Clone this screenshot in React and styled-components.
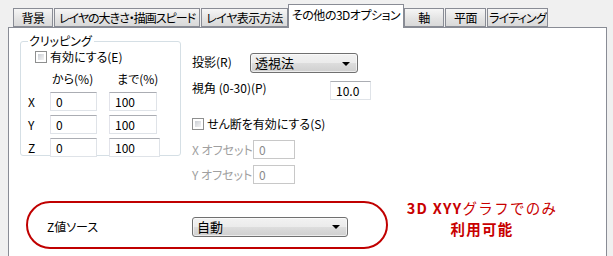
import React from "react";
import styled, { createGlobalStyle } from "styled-components";

const Global = createGlobalStyle`
  html, body { margin: 0; padding: 0; background: #f0f0f0; }
  body {
    font-family: "Noto Sans CJK JP", "Liberation Sans", sans-serif;
    font-size: 12px;
    color: #000;
    width: 613px;
    height: 256px;
    overflow: hidden;
  }
  * { box-sizing: border-box; }
`;

const Window = styled.div`
  width: 613px;
  height: 256px;
  background: #f0f0f0;
  overflow: hidden;
  font-feature-settings: "palt" 1;
`;

const TabStrip = styled.div`
  display: flex;
  align-items: flex-end;
  height: 28px;
  padding-left: 13px;
`;

const Tab = styled.div`
  position: relative;
  width: ${(p) => p.$w}px;
  height: ${(p) => (p.$active ? 24 : 19)}px;
  margin-bottom: ${(p) => (p.$active ? 0 : 1)}px;
  margin-right: ${(p) => p.$gap ?? 1}px;
  border: 1px solid #898c95;
  border-bottom: ${(p) => (p.$active ? "none" : "1px solid #898c95")};
  background: ${(p) =>
    p.$active ? "#ffffff" : "linear-gradient(#f6f6f6, #e4e4e4 55%, #d9d9d9)"};
  z-index: ${(p) => (p.$active ? 1 : 0)};
  display: flex;
  justify-content: center;
  align-items: ${(p) => (p.$active ? "flex-start" : "center")};
  padding-top: ${(p) => (p.$active ? 3 : 0)}px;
  font-size: 12px;
  line-height: 14px;
  letter-spacing: ${(p) => p.$ls ?? -0.5}px;
  white-space: nowrap;
  overflow: hidden;
`;

const Panel = styled.div`
  margin-top: -1px;
  margin-left: 8px;
  width: 599px;
  height: 240px;
  background: #fff;
  border: 1px solid #898c95;
  border-bottom: none;
`;

const TopSection = styled.div`
  display: flex;
  align-items: flex-start;
  padding: 13px 0 0 11px;
`;

const Group = styled.fieldset`
  margin: -7px 0 0 0;
  padding: 0 0 0 6px;
  width: 161px;
  height: 122px;
  border: 1px solid #d5dfe5;
  border-radius: 3px;
  min-width: 0;
`;

const Legend = styled.legend`
  padding: 0 2px 0 1px;
  margin-left: 1px;
  font-size: 12px;
  line-height: 14px;
`;

const CheckRow = styled.label`
  display: flex;
  align-items: center;
  gap: 3px;
  height: 16px;
  margin-top: ${(p) => p.$mt ?? 0}px;
  margin-left: ${(p) => p.$ml ?? 0}px;
  font-size: 12px;
  line-height: 14px;
  color: ${(p) => (p.$disabled ? "#a0a0a0" : "#000")};
`;

const Box = styled.span`
  width: 12px;
  height: 12px;
  border: 1px solid #8e8f8f;
  background: #fff;
  padding: 2px;
  display: inline-block;
  flex: none;
  &::after {
    content: "";
    display: block;
    width: 100%;
    height: 100%;
    background: linear-gradient(135deg, #cbcfd5, #f4f4f4);
  }
`;

const ClipGrid = styled.div`
  display: grid;
  grid-template-columns: 23px 59px 52px;
  grid-auto-rows: 23px;
  align-items: center;
  margin-top: 2px;
`;

const HeadCell = styled.span`
  font-size: 12px;
  line-height: 14px;
  padding-left: ${(p) => p.$pl ?? 0}px;
`;

const AxisLabel = styled.span`
  font-size: 12px;
  padding-left: 1px;
`;

const TextBox = styled.div`
  width: ${(p) => p.$w}px;
  height: 19px;
  border: 1px solid #dfe3e8;
  border-top-color: #abadb3;
  border-left-color: #e2e3ea;
  background: #fff;
  padding-left: 5px;
  display: flex;
  align-items: center;
  font-size: 12px;
  color: ${(p) => (p.$disabled ? "#8a8a8a" : "#000")};
  ${(p) => p.$disabled && "border-color: #c8c8c8;"}
`;

const RightCol = styled.div`
  display: flex;
  flex-direction: column;
  margin-left: 11px;
  padding-top: 12px;
`;

const Row = styled.div`
  display: flex;
  align-items: center;
  height: ${(p) => p.$h ?? 20}px;
  margin-top: ${(p) => p.$mt ?? 0}px;
`;

const Label = styled.span`
  width: ${(p) => p.$w}px;
  flex: none;
  font-size: 12px;
  line-height: 14px;
  margin-top: ${(p) => p.$dy ?? 0}px;
  color: ${(p) => (p.$disabled ? "#a0a0a0" : "#000")};
  white-space: nowrap;
`;

const Select = styled.div`
  width: ${(p) => p.$w}px;
  height: 20px;
  border: 1px solid #707070;
  border-radius: 3px;
  background: linear-gradient(#f2f2f2 0%, #ebebeb 50%, #dddddd 51%, #cfcfcf 100%);
  box-shadow: inset 0 0 0 1px rgba(255, 255, 255, 0.6);
  display: flex;
  align-items: center;
  justify-content: space-between;
  padding: 0 7px 0 4px;
  font-size: 13px;
  line-height: 14px;
`;

const Arrow = styled.span`
  width: 0;
  height: 0;
  border-left: 4px solid transparent;
  border-right: 4px solid transparent;
  border-top: 4px solid #000;
  margin-top: 1px;
`;

const BottomSection = styled.div`
  display: flex;
  align-items: flex-start;
  margin-top: 17px;
  padding-left: 17px;
`;

const Oval = styled.div`
  width: 362px;
  height: 48px;
  border: 2px solid #c00000;
  border-radius: 24px;
  display: flex;
  align-items: center;
  padding: 3px 0 0 19px;
`;

const Note = styled.div`
  width: 188px;
  margin-top: -4px;
  display: flex;
  flex-direction: column;
  align-items: center;
  color: #c80000;
  font-size: 14.5px;
  letter-spacing: 1.3px;
  font-weight: 700;
  font-feature-settings: normal;
`;

const NoteLine = styled.div`
  height: 21px;
  line-height: 21px;
  white-space: nowrap;
`;

const Light = styled.span`
  font-weight: 400;
`;

const tabs = [
  { t: "背景", w: 40 },
  { t: "レイヤの大きさ・描画スピード", w: 146, ls: -1 },
  { t: "レイヤ表示方法", w: 87, gap: 0 },
  { t: "その他の3Dオプション", w: 116, active: true, gap: 0 },
  { t: "軸", w: 40, gap: 1 },
  { t: "平面", w: 41 },
  { t: "ライティング", w: 61, ls: -0.8 },
];

const rows = [
  { a: "X", v1: "0", v2: "100", w2: 48 },
  { a: "Y", v1: "0", v2: "100", w2: 48 },
  { a: "Z", v1: "0", v2: "100", w2: 51 },
];

export default function App() {
  return (
    <Window>
      <Global />
      <TabStrip>
        {tabs.map((tb) => (
          <Tab key={tb.t} $w={tb.w} $active={tb.active} $gap={tb.gap} $ls={tb.ls}>
            {tb.t}
          </Tab>
        ))}
      </TabStrip>
      <Panel>
        <TopSection>
          <Group>
            <Legend>クリッピング</Legend>
            <CheckRow $mt={1} $ml={8}>
              <Box />
              有効にする(E)
            </CheckRow>
            <ClipGrid>
              <span />
              <HeadCell $pl={2}>から(%)</HeadCell>
              <HeadCell $pl={8}>まで(%)</HeadCell>
              {rows.map((r) => (
                <React.Fragment key={r.a}>
                  <AxisLabel>{r.a}</AxisLabel>
                  <TextBox $w={47}>{r.v1}</TextBox>
                  <TextBox $w={r.w2}>{r.v2}</TextBox>
                </React.Fragment>
              ))}
            </ClipGrid>
          </Group>
          <RightCol>
            <Row>
              <Label $w={58} $dy={-2}>投影(R)</Label>
              <Select $w={108}>
                透視法
                <Arrow />
              </Select>
            </Row>
            <Row $mt={7}>
              <Label $w={138} $dy={-4}>視角 (0-30)(P)</Label>
              <TextBox $w={41}>10.0</TextBox>
            </Row>
            <CheckRow $mt={16}>
              <Box />
              せん断を有効にする(S)
            </CheckRow>
            <Row $mt={8} $h={19}>
              <Label $w={61} $disabled>X オフセット</Label>
              <TextBox $w={42} $disabled>0</TextBox>
            </Row>
            <Row $mt={6} $h={19}>
              <Label $w={61} $disabled>Y オフセット</Label>
              <TextBox $w={42} $disabled>0</TextBox>
            </Row>
          </RightCol>
        </TopSection>
        <BottomSection>
          <Oval>
            <Label $w={145}>Z値ソース</Label>
            <Select $w={156}>
              自動
              <Arrow />
            </Select>
          </Oval>
          <Note>
            <NoteLine>
              3D XYY<Light>グラフでのみ</Light>
            </NoteLine>
            <NoteLine>利用可能</NoteLine>
          </Note>
        </BottomSection>
      </Panel>
    </Window>
  );
}
